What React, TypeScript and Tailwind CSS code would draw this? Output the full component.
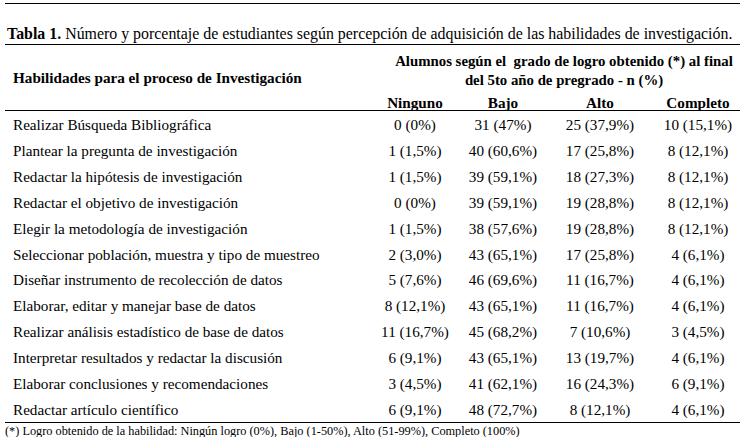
const rows: [string, string, string, string, string][] = [
  ["Realizar Búsqueda Bibliográfica", "0 (0%)", "31 (47%)", "25 (37,9%)", "10 (15,1%)"],
  ["Plantear la pregunta de investigación", "1 (1,5%)", "40 (60,6%)", "17 (25,8%)", "8 (12,1%)"],
  ["Redactar la hipótesis de investigación", "1 (1,5%)", "39 (59,1%)", "18 (27,3%)", "8 (12,1%)"],
  ["Redactar el objetivo de investigación", "0 (0%)", "39 (59,1%)", "19 (28,8%)", "8 (12,1%)"],
  ["Elegir la metodología de investigación", "1 (1,5%)", "38 (57,6%)", "19 (28,8%)", "8 (12,1%)"],
  ["Seleccionar población, muestra y tipo de muestreo", "2 (3,0%)", "43 (65,1%)", "17 (25,8%)", "4 (6,1%)"],
  ["Diseñar instrumento de recolección de datos", "5 (7,6%)", "46 (69,6%)", "11 (16,7%)", "4 (6,1%)"],
  ["Elaborar, editar y manejar base de datos", "8 (12,1%)", "43 (65,1%)", "11 (16,7%)", "4 (6,1%)"],
  ["Realizar análisis estadístico de base de datos", "11 (16,7%)", "45 (68,2%)", "7 (10,6%)", "3 (4,5%)"],
  ["Interpretar resultados y redactar la discusión", "6 (9,1%)", "43 (65,1%)", "13 (19,7%)", "4 (6,1%)"],
  ["Elaborar conclusiones y recomendaciones", "3 (4,5%)", "41 (62,1%)", "16 (24,3%)", "6 (9,1%)"],
  ["Redactar artículo científico", "6 (9,1%)", "48 (72,7%)", "8 (12,1%)", "4 (6,1%)"],
];

const grid = "grid grid-cols-[373px_74px_102px_92px_94px]";

export default function App() {
  return (
    <div className="w-[740px] h-[437px] overflow-hidden bg-white text-black [font-family:'Liberation_Serif',serif] text-[15.2px] leading-none">
      <div className="ml-[5px] mt-[3px] border-t border-black">
        <div className="h-[41px] flex items-end pb-[2px] pl-[2px] border-b border-black text-[15.9px] whitespace-nowrap">
          <span>
            <b>Tabla 1.</b> Número y porcentaje de estudiantes según percepción de adquisición de las habilidades de investigación.
          </span>
        </div>

        <div className={`${grid} h-[66px] border-b border-black font-bold`}>
          <div className="flex items-center pl-[8px]">Habilidades para el proceso de Investigación</div>
          <div className="col-span-4 flex flex-col">
            <div className="pt-[7px] text-center leading-[19px] pl-[10px] text-[14.8px]">
              Alumnos según el&nbsp; grado de logro obtenido (*) al final
              <br />
              del 5to año de pregrado - n (%)
            </div>
            <div className="grid grid-cols-[74px_102px_92px_94px] mt-[5px]">
              <div className="text-center">Ninguno</div>
              <div className="text-center">Bajo</div>
              <div className="text-center">Alto</div>
              <div className="text-center pl-[10px]">Completo</div>
            </div>
          </div>
        </div>

        <div className="border-b border-black pt-px">
          {rows.map((r) => (
            <div key={r[0]} className={`${grid} h-[25.85px] items-center`}>
              <div className="pl-[8px]">{r[0]}</div>
              <div className="text-center">{r[1]}</div>
              <div className="text-center">{r[2]}</div>
              <div className="text-center">{r[3]}</div>
              <div className="text-center pl-[10px]">{r[4]}</div>
            </div>
          ))}
        </div>

        <div className="pt-[2px] text-[12.3px]">
          (*) Logro obtenido de la habilidad: Ningún logro (0%), Bajo (1-50%), Alto (51-99%), Completo (100%)
        </div>
      </div>
    </div>
  );
}
